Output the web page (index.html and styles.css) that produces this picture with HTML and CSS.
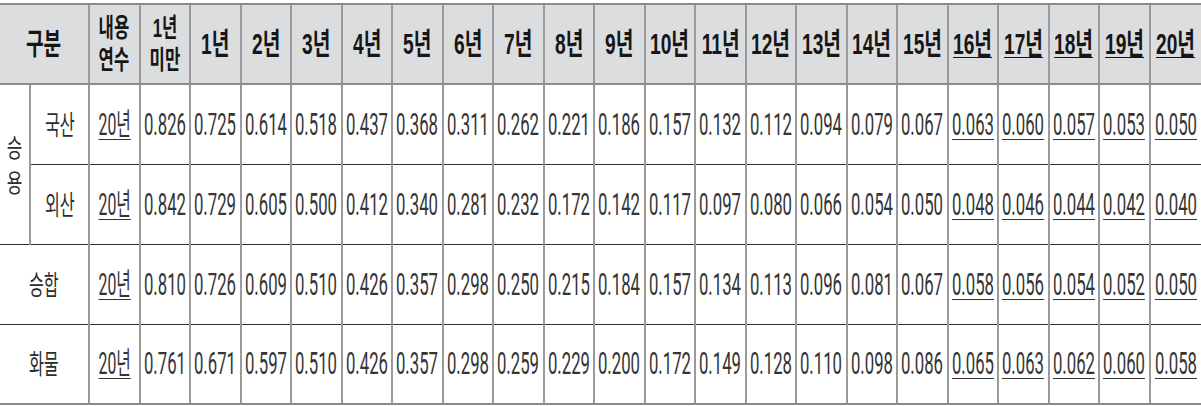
FILE: index.html
```html
<!DOCTYPE html>
<html lang="ko">
<head>
<meta charset="utf-8">
<title>감가상각 잔가율</title>
<link rel="stylesheet" href="styles.css">
</head>
<body>
<table class="dep">
  <colgroup>
    <col class="ca"><col class="cb">
    <col class="cn"><col class="cn"><col class="cn"><col class="cn"><col class="cn"><col class="cn"><col class="cn"><col class="cn"><col class="cn"><col class="cn"><col class="cn">
    <col class="cn"><col class="cn"><col class="cn"><col class="cn"><col class="cn"><col class="cn"><col class="cn"><col class="cn"><col class="cn"><col class="cn"><col class="cz">
  </colgroup>
  <thead>
    <tr>
      <th colspan="2" class="edge"><span class="h">구분</span></th>
      <th><span class="h h2">내용<br>연수</span></th>
      <th><span class="h h2">1년<br>미만</span></th>
      <th><span class="h">1년</span></th>
      <th><span class="h">2년</span></th>
      <th><span class="h">3년</span></th>
      <th><span class="h">4년</span></th>
      <th><span class="h">5년</span></th>
      <th><span class="h">6년</span></th>
      <th><span class="h">7년</span></th>
      <th><span class="h">8년</span></th>
      <th><span class="h">9년</span></th>
      <th><span class="h">10년</span></th>
      <th><span class="h">11년</span></th>
      <th><span class="h">12년</span></th>
      <th><span class="h">13년</span></th>
      <th><span class="h">14년</span></th>
      <th><span class="h">15년</span></th>
      <th><span class="h u">16년</span></th>
      <th><span class="h u">17년</span></th>
      <th><span class="h u">18년</span></th>
      <th><span class="h u">19년</span></th>
      <th><span class="h u">20년</span></th>
    </tr>
  </thead>
  <tbody>
    <tr>
      <td rowspan="2" class="edge grp"><span class="vert"><span class="k">승</span><span class="k">용</span></span></td>
      <td><span class="k">국산</span></td>
      <td><span class="y u">20년</span></td>
      <td><span class="n">0.826</span></td>
      <td><span class="n">0.725</span></td>
      <td><span class="n">0.614</span></td>
      <td><span class="n">0.518</span></td>
      <td><span class="n">0.437</span></td>
      <td><span class="n">0.368</span></td>
      <td><span class="n">0.311</span></td>
      <td><span class="n">0.262</span></td>
      <td><span class="n">0.221</span></td>
      <td><span class="n">0.186</span></td>
      <td><span class="n">0.157</span></td>
      <td><span class="n">0.132</span></td>
      <td><span class="n">0.112</span></td>
      <td><span class="n">0.094</span></td>
      <td><span class="n">0.079</span></td>
      <td><span class="n">0.067</span></td>
      <td><span class="n u">0.063</span></td>
      <td><span class="n u">0.060</span></td>
      <td><span class="n u">0.057</span></td>
      <td><span class="n u">0.053</span></td>
      <td><span class="n u">0.050</span></td>
    </tr>
    <tr>
      <td><span class="k">외산</span></td>
      <td><span class="y u">20년</span></td>
      <td><span class="n">0.842</span></td>
      <td><span class="n">0.729</span></td>
      <td><span class="n">0.605</span></td>
      <td><span class="n">0.500</span></td>
      <td><span class="n">0.412</span></td>
      <td><span class="n">0.340</span></td>
      <td><span class="n">0.281</span></td>
      <td><span class="n">0.232</span></td>
      <td><span class="n">0.172</span></td>
      <td><span class="n">0.142</span></td>
      <td><span class="n">0.117</span></td>
      <td><span class="n">0.097</span></td>
      <td><span class="n">0.080</span></td>
      <td><span class="n">0.066</span></td>
      <td><span class="n">0.054</span></td>
      <td><span class="n">0.050</span></td>
      <td><span class="n u">0.048</span></td>
      <td><span class="n u">0.046</span></td>
      <td><span class="n u">0.044</span></td>
      <td><span class="n u">0.042</span></td>
      <td><span class="n u">0.040</span></td>
    </tr>
    <tr>
      <td colspan="2" class="edge"><span class="k">승합</span></td>
      <td><span class="y u">20년</span></td>
      <td><span class="n">0.810</span></td>
      <td><span class="n">0.726</span></td>
      <td><span class="n">0.609</span></td>
      <td><span class="n">0.510</span></td>
      <td><span class="n">0.426</span></td>
      <td><span class="n">0.357</span></td>
      <td><span class="n">0.298</span></td>
      <td><span class="n">0.250</span></td>
      <td><span class="n">0.215</span></td>
      <td><span class="n">0.184</span></td>
      <td><span class="n">0.157</span></td>
      <td><span class="n">0.134</span></td>
      <td><span class="n">0.113</span></td>
      <td><span class="n">0.096</span></td>
      <td><span class="n">0.081</span></td>
      <td><span class="n">0.067</span></td>
      <td><span class="n u">0.058</span></td>
      <td><span class="n u">0.056</span></td>
      <td><span class="n u">0.054</span></td>
      <td><span class="n u">0.052</span></td>
      <td><span class="n u">0.050</span></td>
    </tr>
    <tr class="last">
      <td colspan="2" class="edge"><span class="k">화물</span></td>
      <td><span class="y u">20년</span></td>
      <td><span class="n">0.761</span></td>
      <td><span class="n">0.671</span></td>
      <td><span class="n">0.597</span></td>
      <td><span class="n">0.510</span></td>
      <td><span class="n">0.426</span></td>
      <td><span class="n">0.357</span></td>
      <td><span class="n">0.298</span></td>
      <td><span class="n">0.259</span></td>
      <td><span class="n">0.229</span></td>
      <td><span class="n">0.200</span></td>
      <td><span class="n">0.172</span></td>
      <td><span class="n">0.149</span></td>
      <td><span class="n">0.128</span></td>
      <td><span class="n">0.110</span></td>
      <td><span class="n">0.098</span></td>
      <td><span class="n">0.086</span></td>
      <td><span class="n u">0.065</span></td>
      <td><span class="n u">0.063</span></td>
      <td><span class="n u">0.062</span></td>
      <td><span class="n u">0.060</span></td>
      <td><span class="n u">0.058</span></td>
    </tr>
  </tbody>
</table>
</body>
</html>
```

FILE: styles.css
```css
html, body {
  margin: 0;
  padding: 0;
  background: #ffffff;
}

.dep {
  border-collapse: collapse;
  table-layout: fixed;
  width: 1201px;
  margin-top: 3px;
  font-family: "Roboto", "Liberation Sans", "Noto Sans CJK KR", sans-serif;
  color: #353535;
}

col.ca { width: 30px; }
col.cb { width: 59px; }
col.cn { width: 50.5px; }
col.cz { width: 51.5px; }

.dep th,
.dep td {
  padding: 0;
  text-align: center;
  vertical-align: middle;
  overflow: visible;
  white-space: nowrap;
  border-left: 2px solid #9a9a9a;
}

.dep .edge {
  border-left: none;
}

.dep thead tr {
  height: 80px;
}

.dep th {
  background: #dcdddf;
  border-top: 2px solid #8c8c8c;
  border-bottom: 2px solid #8c8c8c;
  color: #161616;
}

.dep tbody tr {
  height: 80px;
}

.dep td {
  border-bottom: 1px solid #2e2e2e;
}

.dep tbody tr.last td {
  border-bottom: 2px solid #8c8c8c;
}

/* header labels */
.h {
  display: inline-block;
  margin: 0 -24px;
  font-family: "Liberation Sans", "Noto Sans CJK KR", sans-serif;
  font-weight: bold;
  font-size: 30px;
  line-height: 1;
  transform: scaleX(0.64);
}

.h2 {
  font-size: 26px;
  line-height: 32px;
}

/* body korean labels */
.k {
  display: inline-block;
  margin: 0 -24px;
  font-family: "Noto Sans CJK KR", sans-serif;
  font-size: 27px;
  line-height: 1;
  color: #2c2c2c;
  transform: scaleX(0.6);
}

.vert {
  display: inline-flex;
  flex-direction: column;
  align-items: center;
  gap: 10px;
}

.vert .k {
  margin: 0;
  font-size: 25px;
  transform: scaleX(0.68);
}

/* numbers */
.n,
.y {
  display: inline-block;
  margin: 0 -30px;
  font-weight: 400;
  font-size: 31px;
  line-height: 1;
}

.n {
  transform: scaleX(0.54);
}

.y {
  transform: scaleX(0.51);
}

.u {
  text-decoration: underline;
  text-decoration-thickness: 1px;
  text-underline-offset: 4px;
}

.h.u {
  text-underline-offset: 3px;
}
```
